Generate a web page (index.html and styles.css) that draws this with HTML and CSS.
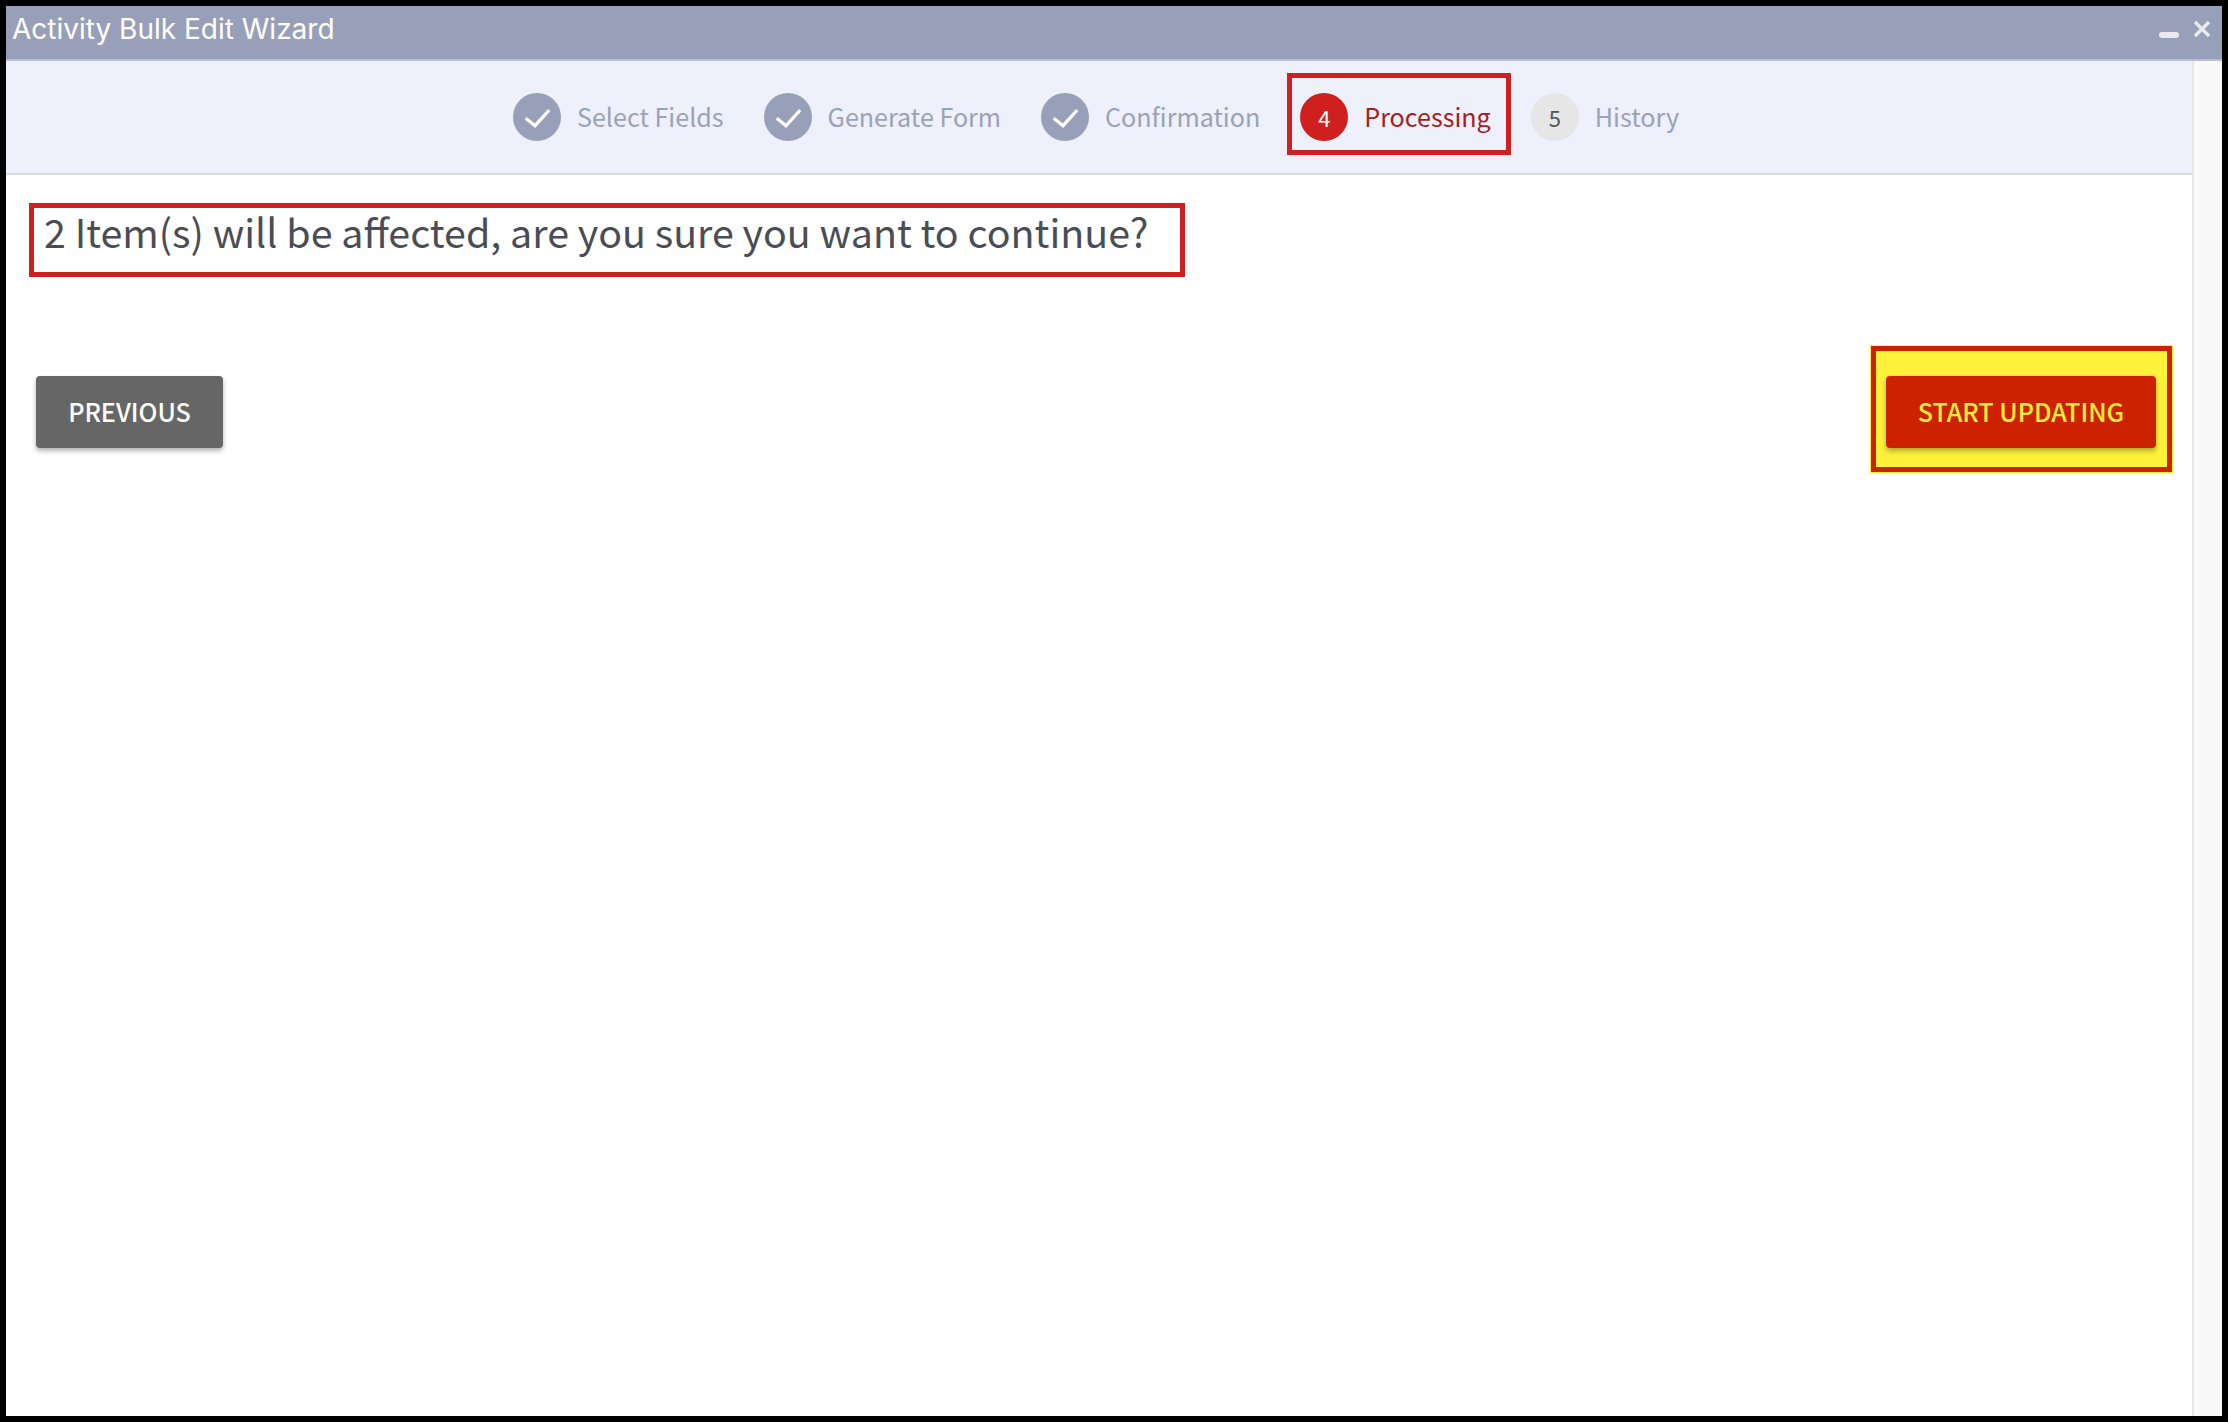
FILE: index.html
```html
<!DOCTYPE html>
<html lang="en">
<head>
<meta charset="utf-8">
<title>Activity Bulk Edit Wizard</title>
<link rel="stylesheet" href="styles.css">
</head>
<body>
<div class="window">
  <header class="titlebar">
    <span class="title">Activity Bulk Edit Wizard</span>
    <div class="controls">
      <svg class="minimize" width="20" height="6" viewBox="0 0 20 6"><rect width="20" height="6" rx="3"/></svg>
      <svg class="close" width="18" height="18" viewBox="0 0 18 18"><path d="M2 2 16 16M16 2 2 16"/></svg>
    </div>
  </header>
  <div class="body">
    <main class="content">
      <nav class="stepper">
        <div class="step done">
          <span class="badge"><svg width="26" height="22" viewBox="0 0 26 22"><path d="M1.700 12.300 11 19.700 25.300 4"/></svg></span>
          <span class="label">Select Fields</span>
        </div>
        <div class="step done">
          <span class="badge"><svg width="26" height="22" viewBox="0 0 26 22"><path d="M1.700 12.300 11 19.700 25.300 4"/></svg></span>
          <span class="label">Generate Form</span>
        </div>
        <div class="step done">
          <span class="badge"><svg width="26" height="22" viewBox="0 0 26 22"><path d="M1.700 12.300 11 19.700 25.300 4"/></svg></span>
          <span class="label">Confirmation</span>
        </div>
        <div class="step active">
          <span class="badge">4</span>
          <span class="label">Processing</span>
        </div>
        <div class="step pending">
          <span class="badge">5</span>
          <span class="label">History</span>
        </div>
      </nav>
      <h1 class="message">2 Item(s) will be affected, are you sure you want to continue?</h1>
      <div class="actions">
        <button class="btn btn-previous" type="button">PREVIOUS</button>
        <div class="highlight">
          <button class="btn btn-start" type="button">START UPDATING</button>
        </div>
      </div>
    </main>
    <div class="scrollbar"></div>
  </div>
</div>
</body>
</html>
```

FILE: styles.css
```css
* { box-sizing: border-box; }
html, body { margin: 0; height: 100%; }
body { background: #000; font-family: "Noto Sans CJK SC", "Noto Sans", sans-serif; }

.window {
  height: 1422px;
  border: 6px solid #000;
  display: flex;
  flex-direction: column;
  background: #fff;
}

.titlebar {
  height: 55px;
  flex: none;
  display: flex;
  align-items: flex-start;
  justify-content: space-between;
  background: #98a0b9;
  border-bottom: 2px solid #b9bfd0;
  padding: 7px 11px 0 6px;
}
.title {
  font-family: Inter, "Liberation Sans", sans-serif;
  font-size: 28px;
  line-height: 33px;
  color: #fff;
}
.controls { display: flex; align-items: flex-end; gap: 14px; height: 25px; padding-top: 8px; }
.minimize { fill: #e9ebf1; display: block; }
.close { display: block; }
.close path { stroke: #e9ebf1; stroke-width: 3.200; fill: none; }

.body { flex: 1; display: flex; min-height: 0; }
.content { flex: 1; min-width: 0; }
.scrollbar { width: 30px; flex: none; background: #f9f9f9; border-left: 2px solid #e6e6e6; }

.stepper {
  height: 114px;
  background: #eef0fb;
  border-bottom: 2px solid #d8d9e0;
  display: flex;
  justify-content: center;
  align-items: center;
  gap: 40px;
  padding-right: 6px;
}
.step { position: relative; display: flex; align-items: center; gap: 16px; }
.badge {
  width: 48px;
  height: 48px;
  border-radius: 50%;
  display: flex;
  align-items: center;
  justify-content: center;
  font-size: 22px;
}
.label { font-size: 25.100px; line-height: 46px; padding-bottom: 2px; color: #9aa2ba; }

.done .badge { background: #98a0b9; }
.done path { fill: none; stroke: #fff; stroke-width: 3.200; }

.active .badge { background: #d01f1f; color: #fff; }
.active .label { color: #a81c22; }
.active::after {
  content: "";
  position: absolute;
  inset: -20px -20px -14px -13px;
  border: 5px solid #d01f1f;
}

.pending .badge { background: #e6e6e6; color: #555; }

.message {
  margin: 28px 0 0 23px;
  width: 1156px;
  height: 74px;
  border: 5px solid #d01f1f;
  padding: 0 0 0 10px;
  font-size: 39.400px;
  font-weight: 400;
  line-height: 45px;
  color: #4a4d55;
  white-space: nowrap;
}

.actions {
  display: flex;
  justify-content: space-between;
  align-items: flex-start;
  margin-top: 69px;
  padding: 0 20px 0 30px;
}
.btn {
  height: 72px;
  border: 0;
  border-radius: 4px;
  padding: 0 0 3px;
  font-family: inherit;
  font-size: 25.100px;
  font-weight: 500;
  box-shadow: 0 3px 5px rgba(0, 0, 0, .3);
}
.btn-previous { width: 187px; margin-top: 30px; background: #666; color: #fff; }
.highlight {
  width: 301px;
  height: 126px;
  border: 5px solid #cc2200;
  background: #fdf13a;
  padding: 25px 0 0 10px;
  box-shadow: 0 0 0 1px #fdf13a;
}
.btn-start { width: 270px; background: #cc2200; color: #fdeb3a; }
```
